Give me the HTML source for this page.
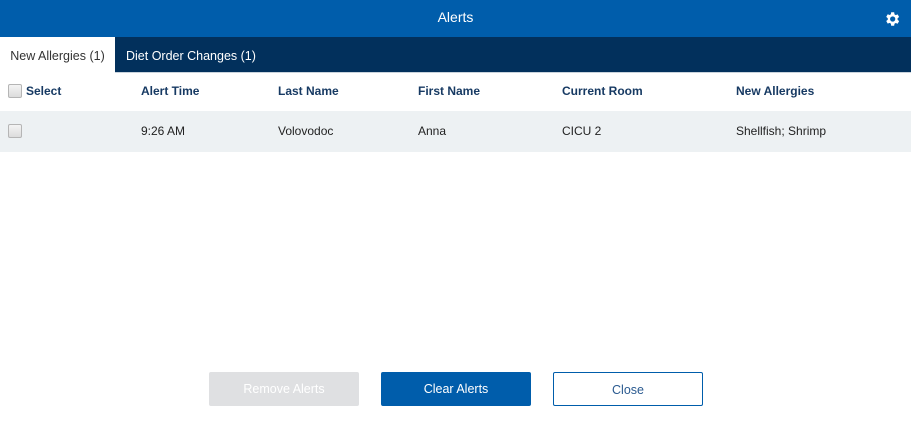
<!DOCTYPE html>
<html><head><style>
*{margin:0;padding:0;box-sizing:border-box}
body{width:911px;height:436px;background:#fff;font-family:"Liberation Sans",sans-serif;position:relative;overflow:hidden;color:#222}
.hdr{position:absolute;left:0;top:0;width:911px;height:37px;background:#005dab;color:#fff;font-size:14px;text-align:center;line-height:35px}
.tabs{position:absolute;left:0;top:37px;width:911px;height:36px;background:#02305c;border-bottom:1px solid #c9d3dc}
.tab{position:absolute;top:0;height:36px;line-height:38px;font-size:12.5px;color:#fff}
.t1{left:0;width:115px;background:#fff;color:#333;text-align:center}
.t2{left:126px}
.th{position:absolute;top:84px;font-size:12px;font-weight:bold;color:#173a63}
.row{position:absolute;left:0;top:111px;width:911px;height:41px;background:#edf1f3}
.td{position:absolute;top:124px;font-size:12px;color:#222}
.cb{position:absolute;width:14px;height:14px;border:1px solid #b5b5b5;border-radius:2px;background:linear-gradient(#f4f4f4,#dcdcdc)}
.btn{position:absolute;top:372px;width:150px;height:34px;border-radius:2px;font-size:12.5px;text-align:center;line-height:34px}
</style></head><body>
<div class="hdr">Alerts</div>
<svg style="position:absolute;left:883px;top:10px" width="18" height="18" viewBox="0 0 24 24"><path fill="#fff" d="M19.4 13a7.5 7.5 0 0 0 0-2l2.1-1.6-2-3.5-2.5 1a7.6 7.6 0 0 0-1.7-1L14.9 3h-4l-.4 2.7a7.6 7.6 0 0 0-1.7 1l-2.5-1-2 3.5L6.4 11a7.5 7.5 0 0 0 0 2l-2.1 1.6 2 3.5 2.5-1a7.6 7.6 0 0 0 1.7 1l.4 2.9h4l.4-2.7a7.6 7.6 0 0 0 1.7-1l2.5 1 2-3.5zM12.9 15.5a3.5 3.5 0 1 1 0-7 3.5 3.5 0 0 1 0 7z"/></svg>
<div class="tabs"><div class="tab t1">New Allergies (1)</div><div class="tab t2">Diet Order Changes (1)</div></div>
<div class="cb" style="left:8px;top:84px"></div>
<div class="th" style="left:26px">Select</div>
<div class="th" style="left:141px">Alert Time</div>
<div class="th" style="left:278px">Last Name</div>
<div class="th" style="left:418px">First Name</div>
<div class="th" style="left:562px">Current Room</div>
<div class="th" style="left:736px">New Allergies</div>
<div class="row"></div>
<div class="cb" style="left:8px;top:124px"></div>
<div class="td" style="left:141px">9:26 AM</div>
<div class="td" style="left:278px">Volovodoc</div>
<div class="td" style="left:418px">Anna</div>
<div class="td" style="left:562px">CICU 2</div>
<div class="td" style="left:736px">Shellfish; Shrimp</div>
<div class="btn" style="left:209px;background:#dfe0e2;color:#fff">Remove Alerts</div>
<div class="btn" style="left:381px;background:#005dab;color:#fff">Clear Alerts</div>
<div class="btn" style="left:553px;border:1px solid #005dab;color:#2a5a90">Close</div>
</body></html>
